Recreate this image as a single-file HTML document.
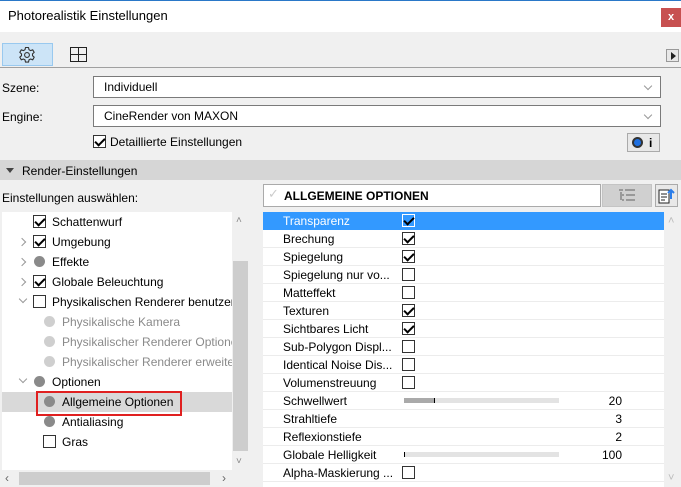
<!DOCTYPE html>
<html><head><style>
*{margin:0;padding:0;box-sizing:border-box}
body{width:681px;height:487px;overflow:hidden;background:#f0f0f0;font-family:"Liberation Sans",sans-serif;font-size:12px;color:#000;position:relative}
.a{position:absolute}
.cb{position:absolute;width:13px;height:13px;border:1px solid #333;background:#fff}
.cb.on::after{content:"";position:absolute;left:3px;top:0px;width:4px;height:8px;border:solid #000;border-width:0 2px 2px 0;transform:rotate(45deg)}
.dot{position:absolute;width:11px;height:11px;border-radius:50%;background:#8a8a8a}
.dot.l{background:#cfcfcf}
.t{position:absolute;white-space:nowrap}
.chev{position:absolute;width:6px;height:6px;border:solid #999;border-width:0 1.5px 1.5px 0}
.row{position:absolute;left:263px;width:401px;height:18px;border-bottom:1px solid #ececec;background:#fff}
.row span{position:absolute;left:20px;top:2px}
.row .cb{left:139px;top:2px}
.row .v{left:auto;right:42px}
</style></head><body>
<div class="a" style="left:0;top:0;width:681px;height:32px;background:#fff;border-top:1px solid #2a78c8"></div>
<div class="t" style="left:8px;top:8px;font-size:13px">Photorealistik Einstellungen</div>
<div class="a" style="left:661px;top:8px;width:20px;height:19px;background:#c75050;color:#fff;font-size:11px;font-weight:bold;text-align:center;line-height:18px">x</div>
<div class="a" style="left:2px;top:43px;width:51px;height:23px;background:#cce4f7;border:1px solid #99c9ef"></div>
<svg class="a" style="left:18px;top:46px" width="18" height="18" viewBox="0 0 18 18"><path d="M7.5 1.5h3l.5 2.2 1.6.9 2.1-.8 1.5 2.6-1.7 1.5v1.8l1.7 1.5-1.5 2.6-2.1-.8-1.6.9-.5 2.2h-3l-.5-2.2-1.6-.9-2.1.8-1.5-2.6 1.7-1.5V7.9L1.8 6.4l1.5-2.6 2.1.8L7 3.7z" fill="none" stroke="#333" stroke-width="1.1" stroke-linejoin="round"/><circle cx="9" cy="9" r="2.4" fill="none" stroke="#333" stroke-width="1.1"/></svg>
<svg class="a" style="left:70px;top:47px" width="17" height="15" viewBox="0 0 17 15"><rect x="0.5" y="0.5" width="16" height="14" fill="none" stroke="#222"/><path d="M8.5 1v13M1 7.5h15" stroke="#222"/></svg>
<div class="a" style="left:666px;top:49px;width:13px;height:13px;border:1px solid #999;background:#e8e8e8"></div>
<div class="a" style="left:671px;top:52px;border-left:5px solid #222;border-top:4px solid transparent;border-bottom:4px solid transparent"></div>
<div class="a" style="left:0;top:67px;width:681px;height:1px;background:#a0a0a0"></div>
<div class="t" style="left:2px;top:81px">Szene:</div>
<div class="a" style="left:93px;top:76px;width:568px;height:22px;background:#fff;border:1px solid #7a7a7a"></div>
<div class="t" style="left:104px;top:80px">Individuell</div>
<div class="chev" style="left:645px;top:83px;transform:rotate(45deg)"></div>
<div class="t" style="left:2px;top:110px">Engine:</div>
<div class="a" style="left:93px;top:105px;width:568px;height:22px;background:#fff;border:1px solid #7a7a7a"></div>
<div class="t" style="left:104px;top:109px">CineRender von MAXON</div>
<div class="chev" style="left:645px;top:112px;transform:rotate(45deg)"></div>
<div class="cb on" style="left:93px;top:135px"></div>
<div class="t" style="left:110px;top:135px">Detaillierte Einstellungen</div>
<div class="a" style="left:627px;top:133px;width:33px;height:19px;border:1px solid #aaa;background:#e8e8e8"></div>
<div class="a" style="left:632px;top:137px;width:11px;height:11px;border-radius:50%;background:#1e6fe0;border:2px solid #333"></div>
<div class="t" style="left:649px;top:136px;font-weight:bold">i</div>
<div class="a" style="left:0;top:160px;width:681px;height:20px;background:#d6d6d6"></div>
<div class="a" style="left:6px;top:168px;border-top:5px solid #444;border-left:4px solid transparent;border-right:4px solid transparent"></div>
<div class="t" style="left:22px;top:164px">Render-Einstellungen</div>
<div class="t" style="left:2px;top:191px">Einstellungen auswählen:</div>
<div class="a" style="left:263px;top:184px;width:338px;height:23px;background:#fff;border:1px solid #aaa"></div>
<div class="t" style="left:268px;top:186px;color:#ccc;font-size:13px">✓</div>
<div class="t" style="left:284px;top:189px;font-weight:bold">ALLGEMEINE OPTIONEN</div>
<div class="a" style="left:602px;top:184px;width:50px;height:23px;background:#d0d0d0;border:1px solid #c4c4c4"></div>
<svg class="a" style="left:619px;top:189px" width="17" height="13"><path d="M0 1h4M6 1h10M3 6h2M7 6h9M3 11h2M7 11h9M2 3v8" stroke="#999" stroke-width="2"/></svg>
<div class="a" style="left:655px;top:184px;width:23px;height:23px;background:#e8e8e8;border:1px solid #aaa"></div>
<svg class="a" style="left:657px;top:186px" width="19" height="19"><rect x="2" y="4" width="10" height="13" fill="#fff" stroke="#222"/><path d="M4 8h6M4 11h6M4 14h4" stroke="#222"/><path d="M14 13V5M11 7l3-3 3 3" stroke="#2b7de9" stroke-width="2" fill="none"/></svg>
<!-- left tree -->
<div class="a" style="left:0;top:0;width:232px;height:470px;overflow:hidden">
<div class="a" style="left:2px;top:212px;width:230px;height:258px;background:#fff"></div>
<div class="a" style="left:2px;top:392px;width:230px;height:20px;background:#d9d9d9"></div>
<div class="a" style="left:36px;top:391px;width:146px;height:25px;border:2px solid #e02020"></div>
<div class="cb on" style="left:33px;top:215px"></div><div class="t" style="left:52px;top:215px">Schattenwurf</div>
<div class="chev" style="left:19px;top:239px;transform:rotate(-45deg)"></div><div class="cb on" style="left:33px;top:235px"></div><div class="t" style="left:52px;top:235px">Umgebung</div>
<div class="chev" style="left:19px;top:259px;transform:rotate(-45deg)"></div><div class="dot" style="left:34px;top:256px"></div><div class="t" style="left:52px;top:255px">Effekte</div>
<div class="chev" style="left:19px;top:279px;transform:rotate(-45deg)"></div><div class="cb on" style="left:33px;top:275px"></div><div class="t" style="left:52px;top:275px">Globale Beleuchtung</div>
<div class="chev" style="left:20px;top:296px;transform:rotate(45deg)"></div><div class="cb" style="left:33px;top:295px"></div><div class="t" style="left:52px;top:295px">Physikalischen Renderer benutzen</div>
<div class="dot l" style="left:44px;top:316px"></div><div class="t" style="left:62px;top:315px;color:#8a8a8a">Physikalische Kamera</div>
<div class="dot l" style="left:44px;top:336px"></div><div class="t" style="left:62px;top:335px;color:#8a8a8a">Physikalischer Renderer Optionen</div>
<div class="dot l" style="left:44px;top:356px"></div><div class="t" style="left:62px;top:355px;color:#8a8a8a">Physikalischer Renderer erweitert</div>
<div class="chev" style="left:20px;top:376px;transform:rotate(45deg)"></div><div class="dot" style="left:34px;top:376px"></div><div class="t" style="left:52px;top:375px">Optionen</div>
<div class="dot" style="left:44px;top:396px"></div><div class="t" style="left:62px;top:395px">Allgemeine Optionen</div>
<div class="dot" style="left:44px;top:416px"></div><div class="t" style="left:62px;top:415px">Antialiasing</div>
<div class="cb" style="left:43px;top:435px"></div><div class="t" style="left:62px;top:435px">Gras</div>
</div>
<div class="a" style="left:232px;top:212px;width:16px;height:258px;background:#f0f0f0"></div>
<div class="a" style="left:233px;top:261px;width:15px;height:190px;background:#cdcdcd"></div>
<div class="t" style="left:236px;top:215px;color:#888;font-size:10px">˄</div>
<div class="t" style="left:236px;top:456px;color:#888;font-size:10px">˅</div>
<div class="a" style="left:19px;top:472px;width:191px;height:13px;background:#cdcdcd"></div>
<div class="t" style="left:5px;top:471px;color:#666">‹</div><div class="t" style="left:222px;top:471px;color:#666">›</div>
<!-- right table -->
<div class="a" style="left:263px;top:212px;width:401px;height:275px;background:#fff"></div>
<div class="row" style="top:212px;background:#3399ff;color:#fff;border-color:#3399ff"><span>Transparenz</span><div class="cb on" style="border-color:#fff;background:#3399ff"></div></div>
<div class="row" style="top:230px"><span>Brechung</span><div class="cb on"></div></div>
<div class="row" style="top:248px"><span>Spiegelung</span><div class="cb on"></div></div>
<div class="row" style="top:266px"><span>Spiegelung nur vo...</span><div class="cb"></div></div>
<div class="row" style="top:284px"><span>Matteffekt</span><div class="cb"></div></div>
<div class="row" style="top:302px"><span>Texturen</span><div class="cb on"></div></div>
<div class="row" style="top:320px"><span>Sichtbares Licht</span><div class="cb on"></div></div>
<div class="row" style="top:338px"><span>Sub-Polygon Displ...</span><div class="cb"></div></div>
<div class="row" style="top:356px"><span>Identical Noise Dis...</span><div class="cb"></div></div>
<div class="row" style="top:374px"><span>Volumenstreuung</span><div class="cb"></div></div>
<div class="row" style="top:392px"><span>Schwellwert</span><div class="a" style="left:141px;top:6px;width:155px;height:5px;background:#e3e3e3"></div><div class="a" style="left:141px;top:6px;width:31px;height:5px;background:#aaa;border-right:1px solid #000"></div><span class="v">20</span></div>
<div class="row" style="top:410px"><span>Strahltiefe</span><span class="v">3</span></div>
<div class="row" style="top:428px"><span>Reflexionstiefe</span><span class="v">2</span></div>
<div class="row" style="top:446px"><span>Globale Helligkeit</span><div class="a" style="left:141px;top:6px;width:155px;height:5px;background:#e3e3e3;border-left:1px solid #000"></div><span class="v">100</span></div>
<div class="row" style="top:464px"><span>Alpha-Maskierung ...</span><div class="cb"></div></div>
<div class="a" style="left:664px;top:212px;width:17px;height:275px;background:#f0f0f0"></div>
<div class="t" style="left:668px;top:215px;color:#bbb;font-size:11px">˄</div>
<div class="t" style="left:668px;top:472px;color:#bbb;font-size:11px">˅</div>
</body></html>
